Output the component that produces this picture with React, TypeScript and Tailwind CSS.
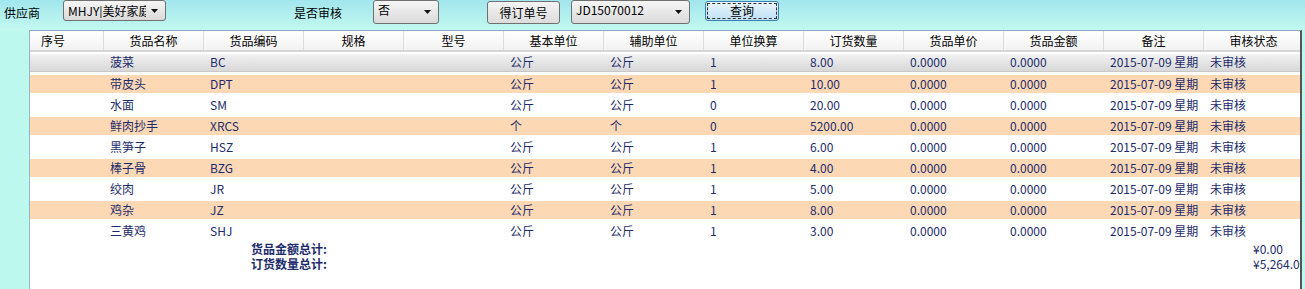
import React from 'react';

const font = { fontFamily: '"Noto Sans CJK SC", "Liberation Sans", sans-serif' };

const headers = ['序号', '货品名称', '货品编码', '规格', '型号', '基本单位', '辅助单位', '单位换算', '订货数量', '货品单价', '货品金额', '备注', '审核状态'];

// name, code, base unit, aux unit, ratio, qty
const rows: [string, string, string, string, string, string][] = [
  ['菠菜', 'BC', '公斤', '公斤', '1', '8.00'],
  ['带皮头', 'DPT', '公斤', '公斤', '1', '10.00'],
  ['水面', 'SM', '公斤', '公斤', '0', '20.00'],
  ['鲜肉抄手', 'XRCS', '个', '个', '0', '5200.00'],
  ['黑笋子', 'HSZ', '公斤', '公斤', '1', '6.00'],
  ['棒子骨', 'BZG', '公斤', '公斤', '1', '4.00'],
  ['绞肉', 'JR', '公斤', '公斤', '1', '5.00'],
  ['鸡杂', 'JZ', '公斤', '公斤', '1', '8.00'],
  ['三黄鸡', 'SHJ', '公斤', '公斤', '1', '3.00'],
];

function Arrow() {
  return (
    <svg width="7" height="4" viewBox="0 0 7 4" className="shrink-0">
      <path d="M0 0H7L3.5 4Z" fill="#111" />
    </svg>
  );
}

function Select({ value, textW, className }: { value: string; textW: number; className: string }) {
  return (
    <div
      className={`flex items-center justify-between rounded-[3px] border border-[#707070] bg-gradient-to-b from-[#f6f6f6] to-[#dadada] pl-[4px] pr-[7px] text-[12px] leading-[14px] text-black ${className}`}
    >
      <span className="overflow-hidden whitespace-nowrap" style={{ width: textW }}>
        {value}
      </span>
      <Arrow />
    </div>
  );
}

function Cell({ w, children, className = '' }: { w: number; children?: React.ReactNode; className?: string }) {
  return (
    <div className={`shrink-0 overflow-hidden whitespace-nowrap pl-[7px] ${className}`} style={{ width: w }}>
      {children}
    </div>
  );
}

export default function App() {
  const widths = headers.map((_, i) => (i === 0 ? 73 : 100));

  return (
    <div className="flex h-[289px] w-[1305px] flex-col overflow-hidden bg-[#bdf8ef]" style={font}>
      {/* toolbar */}
      <div className="flex h-[30px] shrink-0 items-start bg-gradient-to-b from-[#a2e6ee] to-[#c2f8ef] text-[12px] text-black">
        <span className="ml-[4px] mt-[5px] leading-[16px]">供应商</span>
        <Select value="MHJY|美好家庭" textW={78} className="ml-[23px] h-[21px] w-[103px]" />
        <span className="ml-[128px] mt-[5px] leading-[16px]">是否审核</span>
        <Select value="否" textW={40} className="ml-[31px] h-[24px] w-[66px] items-start pt-[2px] [&>svg]:mt-[7px]" />
        <button className="ml-[48px] mt-[1px] flex h-[23px] w-[73px] items-center justify-center rounded-[3px] border border-[#707070] bg-gradient-to-b from-[#f4f4f4] to-[#dcdcdc] text-[12px]">
          得订单号
        </button>
        <Select value="JD15070012" textW={90} className="ml-[11px] h-[24px] w-[119px] items-start pt-[2px] [&>svg]:mt-[7px]" />
        <button className="ml-[15px] mt-[1px] h-[20px] w-[74px] rounded-[3px] border border-[#3c7fb1] bg-gradient-to-b from-[#eaf6fd] to-[#bfe0f3] p-[1px] text-[12px]">
          <div className="flex h-full w-full items-center justify-center border border-dashed border-[#333]">查询</div>
        </button>
      </div>

      {/* grid panel */}
      <div className="ml-[29px] flex w-[1273px] flex-1 flex-col overflow-hidden border-l border-t border-r-2 border-l-[#9ab4c8] border-t-[#8fa9c4] border-r-[#555] bg-white text-[12px]">
        {/* header */}
        <div className="flex h-[21px] shrink-0 border-b-2 border-[#d6d6d6] bg-gradient-to-b from-white to-[#f2f2f2] leading-[20px] text-black">
          {headers.map((h, i) => (
            <div
              key={h}
              className={`shrink-0 ${i === 0 ? 'pl-[11px] text-left' : 'border-l border-[#dcdcdc] text-center'}`}
              style={{ width: widths[i] }}
            >
              {h}
            </div>
          ))}
        </div>

        {/* rows */}
        {rows.map((r, i) => {
          const bg = i === 0 ? 'bg-gradient-to-b from-[#f2f2f2] to-[#d8d8d8] border-b border-[#c8c8c8]' : i % 2 === 1 ? 'bg-[#fdd8b5]' : '';
          return (
            <div key={r[1]} className="flex h-[21px] shrink-0 items-center">
              <div className={`flex h-[18px] w-full items-center leading-[18px] text-[#1c2b6b] ${bg}`}>
                <Cell w={73} />
                <Cell w={100}>{r[0]}</Cell>
                <Cell w={100}>{r[1]}</Cell>
                <Cell w={100} />
                <Cell w={100} />
                <Cell w={100}>{r[2]}</Cell>
                <Cell w={100}>{r[3]}</Cell>
                <Cell w={100}>{r[4]}</Cell>
                <Cell w={100}>{r[5]}</Cell>
                <Cell w={100}>0.0000</Cell>
                <Cell w={100}>0.0000</Cell>
                <Cell w={100}>
                  <div className="w-[88px] overflow-hidden">2015-07-09 星期四</div>
                </Cell>
                <Cell w={100}>未审核</Cell>
              </div>
            </div>
          );
        })}

        {/* totals */}
        <div className="flex leading-[15px] text-[#1c2b6b]">
          <div className="ml-[221px] flex w-[1002px] shrink-0 flex-col font-bold">
            <span>货品金额总计:</span>
            <span>订货数量总计:</span>
          </div>
          <div className="flex shrink-0 flex-col whitespace-nowrap">
            <span>¥0.00</span>
            <span>¥5,264.00</span>
          </div>
        </div>
      </div>
    </div>
  );
}
